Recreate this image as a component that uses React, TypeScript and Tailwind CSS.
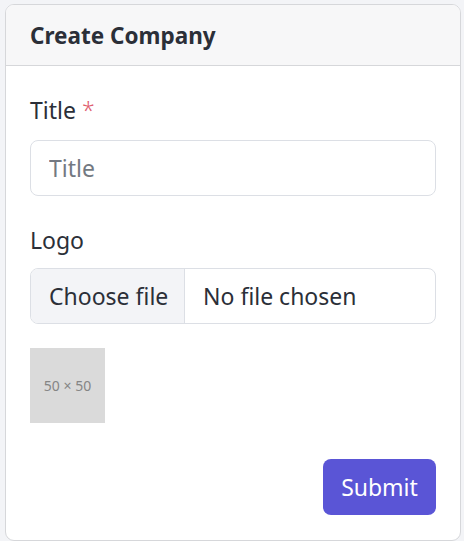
import React from "react";

export default function App() {
  return (
    <div className="min-h-[541px] bg-[#f3f4f7] pt-[4px] pl-[5px]" style={{ fontFamily: '"Noto Sans", "Open Sans", sans-serif' }}>
      <div className="w-[456px] h-[537px] bg-white border border-[#d6d7da] rounded-[9px] overflow-hidden flex flex-col">
        <div className="h-[61px] shrink-0 bg-[#f7f7f8] border-b border-[#d6d7da] flex items-center px-[24px] pt-[3px]">
          <h1 className="text-[22.5px] font-bold text-[#2b2f38] leading-none">Create Company</h1>
        </div>
        <div className="flex flex-col px-[24px] pt-[26px] pb-[24px] flex-1">
          <label className="text-[23px] leading-[36px] text-[#2b2f38] mb-[12px]">
            Title <span className="text-[#e05d6f] font-light">*</span>
          </label>
          <input
            placeholder="Title"
            className="h-[56px] w-full border border-[#dcdfe5] rounded-[8px] px-[18px] text-[23px] text-[#2b2f38] placeholder:text-[#737982] outline-none"
          />
          <label className="text-[23px] leading-[36px] text-[#2b2f38] mt-[26px] mb-[10px]">Logo</label>
          <div className="h-[56px] w-full border border-[#dcdfe5] rounded-[8px] overflow-hidden flex items-stretch text-[23px] text-[#2b2f38]">
            <div className="w-[154px] shrink-0 bg-[#f3f4f7] border-r border-[#dcdfe5] flex items-center pl-[18px]">Choose file</div>
            <div className="flex items-center pl-[18px]">No file chosen</div>
          </div>
          <div className="mt-[24px] w-[75px] h-[75px] bg-[#dadada] flex items-center justify-center text-[14px] text-[#858585]">
            50 × 50
          </div>
          <div className="mt-[36px] flex justify-end">
            <button className="h-[56px] w-[113px] bg-[#5a55d6] rounded-[8px] text-white text-[23px]">Submit</button>
          </div>
        </div>
      </div>
    </div>
  );
}
